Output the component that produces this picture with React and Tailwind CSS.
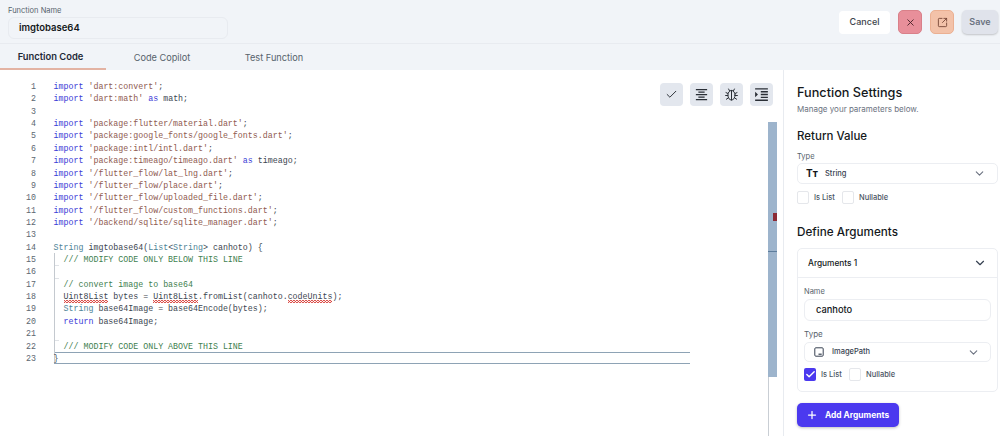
import React from "react";
import { X, SquareArrowOutUpRight, Check, ChevronDown, Plus } from "lucide-react";
import { MdFormatAlignCenter, MdFormatIndentIncrease } from "react-icons/md";

const K = ({ children }) => <span className="text-[#3b3bd6]">{children}</span>;
const S = ({ children }) => <span className="text-[#8f5a4f]">{children}</span>;
const C = ({ children }) => <span className="text-[#3f7f4f]">{children}</span>;
const T = ({ children }) => <span className="text-[#4f8497]">{children}</span>;
const W = ({ children }) => (
  <span className="pb-[2px] bg-[linear-gradient(135deg,transparent_35%,#d9423c_35%,#d9423c_65%,transparent_65%),linear-gradient(45deg,transparent_35%,#d9423c_35%,#d9423c_65%,transparent_65%)] bg-[length:3px_3px] bg-repeat-x bg-bottom">
    {children}
  </span>
);

const imp = (p, as) => (
  <>
    <K>import</K> <S>'{p}'</S>
    {as ? (
      <>
        {" "}
        <K>as</K> {as}
      </>
    ) : null}
    ;
  </>
);

const lines = [
  imp("dart:convert"),
  imp("dart:math", "math"),
  "",
  imp("package:flutter/material.dart"),
  imp("package:google_fonts/google_fonts.dart"),
  imp("package:intl/intl.dart"),
  imp("package:timeago/timeago.dart", "timeago"),
  imp("/flutter_flow/lat_lng.dart"),
  imp("/flutter_flow/place.dart"),
  imp("/flutter_flow/uploaded_file.dart"),
  imp("/flutter_flow/custom_functions.dart"),
  imp("/backend/sqlite/sqlite_manager.dart"),
  "",
  <>
    <T>String</T> imgtobase64(<T>List</T>&lt;<T>String</T>&gt; canhoto) {"{"}
  </>,
  <>
    {"  "}
    <C>/// MODIFY CODE ONLY BELOW THIS LINE</C>
  </>,
  "",
  <>
    {"  "}
    <C>// convert image to base64</C>
  </>,
  <>
    {"  "}
    <W>Uint8List</W> bytes = <W>Uint8List</W>.fromList(canhoto.<W>codeUnits</W>);
  </>,
  <>
    {"  "}
    <T>String</T> base64Image = base64Encode(bytes);
  </>,
  <>
    {"  "}
    <K>return</K> base64Image;
  </>,
  "",
  <>
    {"  "}
    <C>/// MODIFY CODE ONLY ABOVE THIS LINE</C>
  </>,
  "}",
];

const ToolBtn = ({ children }) => (
  <div className="w-[23px] h-[23px] rounded-[4px] bg-[#e3e7ee] flex items-center justify-center text-[#2a2f36]">
    {children}
  </div>
);

const Ladybug = () => (
  <svg width="15" height="15" viewBox="0 0 15 15" fill="none" stroke="currentColor" strokeWidth="1" strokeLinecap="round">
    <ellipse cx="7.5" cy="8.2" rx="3.6" ry="4.8" />
    <path d="M7.5 3.4V13" />
    <path d="M5.5 3.8 4.6 2M9.5 3.8 10.4 2" />
    <path d="M3.9 6.5 2 5.6M11.1 6.5 13 5.6M3.9 8.5H1.6M11.1 8.5h2.3M4.3 11 2.4 12.2M10.7 11l1.9 1.2" />
  </svg>
);

const PathIcon = () => (
  <svg width="10" height="10" viewBox="0 0 10 10" fill="none" stroke="#374151" strokeWidth="1">
    <rect x="0.8" y="0.8" width="8.4" height="8.4" rx="1" />
    <path d="M4.5 7.2h3.2" strokeWidth="1.2" />
  </svg>
);

const Box = ({ checked }) =>
  checked ? (
    <div className="w-[12px] h-[13px] rounded-[2px] bg-[#4b39ef] flex items-center justify-center">
      <Check size={11} strokeWidth={3} className="text-white" />
    </div>
  ) : (
    <div className="w-[12px] h-[13px] rounded-[2px] border border-[#e5e7eb] bg-white" />
  );

const Checks = ({ first }) => (
  <div className="flex items-center text-[7.5px] font-medium text-[#4b5563]">
    <Box checked={first} />
    <span className="ml-[5px] w-[28px]">Is List</span>
    <Box />
    <span className="ml-[5px]">Nullable</span>
  </div>
);

export default function App() {
  return (
    <div className="w-[1000px] h-[436px] overflow-hidden flex flex-col bg-white text-[#14181b] font-['Inter',sans-serif]">
      <header className="h-[44px] shrink-0 bg-[#f1f4f8] border-b border-[#e8ebf0] flex items-start justify-between pl-[8px] pr-[2px]">
        <div className="pt-[6px]">
          <div className="text-[7.5px] leading-[10px] text-[#57636c]">Function Name</div>
          <div className="mt-[1px] w-[220px] h-[22px] rounded-[6px] border border-[#e8ebf0] flex items-center pl-[10px] text-[9.5px] font-semibold">
            imgtobase64
          </div>
        </div>
        <div className="flex items-center gap-[8px] pt-[10px]">
          <div className="w-[51px] h-[23px] rounded-[4px] bg-white flex items-center justify-center text-[9px] font-medium text-[#3d444b]">
            Cancel
          </div>
          <div className="w-[24px] h-[24px] rounded-[5px] bg-[#e88f9a] border border-[#d98089] flex items-center justify-center text-[#4a2328]">
            <X size={11} strokeWidth={2} />
          </div>
          <div className="w-[24px] h-[24px] rounded-[5px] bg-[#f3c2a9] border border-[#ebb092] flex items-center justify-center text-[#6b3a2c]">
            <SquareArrowOutUpRight size={11} strokeWidth={1.8} />
          </div>
          <div className="w-[36px] h-[24px] rounded-[5px] bg-[#e0e3eb] shadow-[0_1px_2px_rgba(0,0,0,0.2)] flex items-center justify-center text-[9px] font-semibold text-[#6b7280]">
            Save
          </div>
        </div>
      </header>

      <nav className="h-[26px] shrink-0 bg-[#f1f4f8] flex text-[9.2px]">
        <div className="w-[106px] pr-[5px] pt-[2px] flex items-center justify-center text-[9.4px] font-semibold border-b-2 border-[#e3b3a3] text-[#1f2937]">
          Function Code
        </div>
        <div className="w-[112px] pt-[1px] flex items-center justify-center text-[#57636c]">Code Copilot</div>
        <div className="w-[112px] pt-[1px] flex items-center justify-center text-[#57636c]">Test Function</div>
      </nav>

      <div className="flex-1 flex min-h-0">
        <main className="relative w-[783px] shrink-0 pt-[11px] font-['Liberation_Mono',monospace] text-[8.3px] text-[#3c4650]">
          <div className="absolute top-[13px] left-[660px] flex gap-[7px] z-10">
            <ToolBtn>
              <Check size={13} strokeWidth={1.8} />
            </ToolBtn>
            <ToolBtn>
              <MdFormatAlignCenter size={15} />
            </ToolBtn>
            <ToolBtn>
              <Ladybug />
            </ToolBtn>
            <ToolBtn>
              <MdFormatIndentIncrease size={17} />
            </ToolBtn>
          </div>

          <div className="absolute left-[54px] top-[282px] w-[636px] h-[12px] border-y border-[#8ea3b5]" />
          <div className="absolute left-[54px] top-[183px] h-[110px] border-l border-[#c4c9cf]" />

          {lines.map((l, i) => (
            <div key={i} className="relative flex h-[12.36px] leading-[12.36px] whitespace-pre">
              <div className="w-[36px] text-right text-[#5b6670] shrink-0">{i + 1}</div>
              <div className="ml-[17.6px]">{l}</div>
              {i === 14 || i === 15 || i === 20 ? (
                <div className="absolute left-[55px] bottom-0 w-[4px] h-px bg-[#dfe2e6]" />
              ) : null}
            </div>
          ))}

          <div className="absolute left-[768px] top-[52px] w-[9px] h-[255px] bg-[#9db4cc]">
            <div className="absolute left-[5px] top-[91px] w-[4px] h-[8px] bg-[#8c2a35]" />
            <div className="absolute left-0 top-[129px] w-[9px] h-[1px] bg-[#5d7d9c]" />
          </div>
          <div className="absolute left-[768px] top-[307px] bottom-0 border-l border-[#c9ced4]" />
        </main>

        <aside className="flex-1 border-l border-[#e8ebf0] pl-[13px] pr-[2px] pt-[14px]">
          <div className="text-[12.7px] leading-[17px] font-medium">Function Settings</div>
          <div className="mt-[3px] text-[8px] leading-[11px] text-[#6b7280]">Manage your parameters below.</div>

          <div className="mt-[13px] text-[11.5px] leading-[16px] font-medium">Return Value</div>
          <div className="mt-[8px] text-[7.5px] leading-[10px] text-[#57636c]">Type</div>
          <div className="mt-[1px] h-[21px] w-[201px] rounded-[5px] border border-[#eceef2] flex items-center pl-[8px] pr-[11px]">
            <span className="w-[19px] text-[10px] font-bold">Tт</span>
            <span className="text-[7.5px] font-medium text-[#374151]">String</span>
            <ChevronDown size={13} className="ml-auto text-[#6b7280]" />
          </div>
          <div className="mt-[7px]">
            <Checks />
          </div>

          <div className="mt-[20px] text-[11.7px] leading-[16px] font-medium">Define Arguments</div>
          <div className="mt-[8px] w-[201px] h-[144px] rounded-[5px] border border-[#eceef2] px-[6px]">
            <div className="-mx-[6px] h-[29px] px-[10px] border-b border-[#eceef2] flex items-center justify-between text-[8.3px] font-medium">
              Arguments 1
              <ChevronDown size={14} className="text-[#374151]" />
            </div>
            <div className="mt-[9px] text-[7.5px] leading-[10px] text-[#57636c]">Name</div>
            <div className="mt-[2px] h-[22px] w-[187px] rounded-[6px] border border-[#eceef2] flex items-center pl-[11px] text-[9.3px] font-medium">
              canhoto
            </div>
            <div className="mt-[8px] text-[8px] leading-[10px] text-[#57636c]">Type</div>
            <div className="mt-[3px] h-[20px] w-[187px] rounded-[5px] border border-[#eceef2] flex items-center pl-[9px] pr-[10px]">
              <PathIcon />
              <span className="ml-[8px] text-[7.5px] font-medium text-[#374151]">ImagePath</span>
              <ChevronDown size={13} className="ml-auto text-[#6b7280]" />
            </div>
            <div className="mt-[6px]">
              <Checks first />
            </div>
          </div>
          <div className="mt-[11px] w-[102px] h-[24px] rounded-[5px] bg-[#4b39ef] shadow-[0_1px_3px_rgba(0,0,0,0.25)] flex items-center pl-[9px] text-white text-[8.4px] font-bold">
            <Plus size={12} strokeWidth={2.5} />
            <span className="ml-[7px]">Add Arguments</span>
          </div>
        </aside>
      </div>
    </div>
  );
}
